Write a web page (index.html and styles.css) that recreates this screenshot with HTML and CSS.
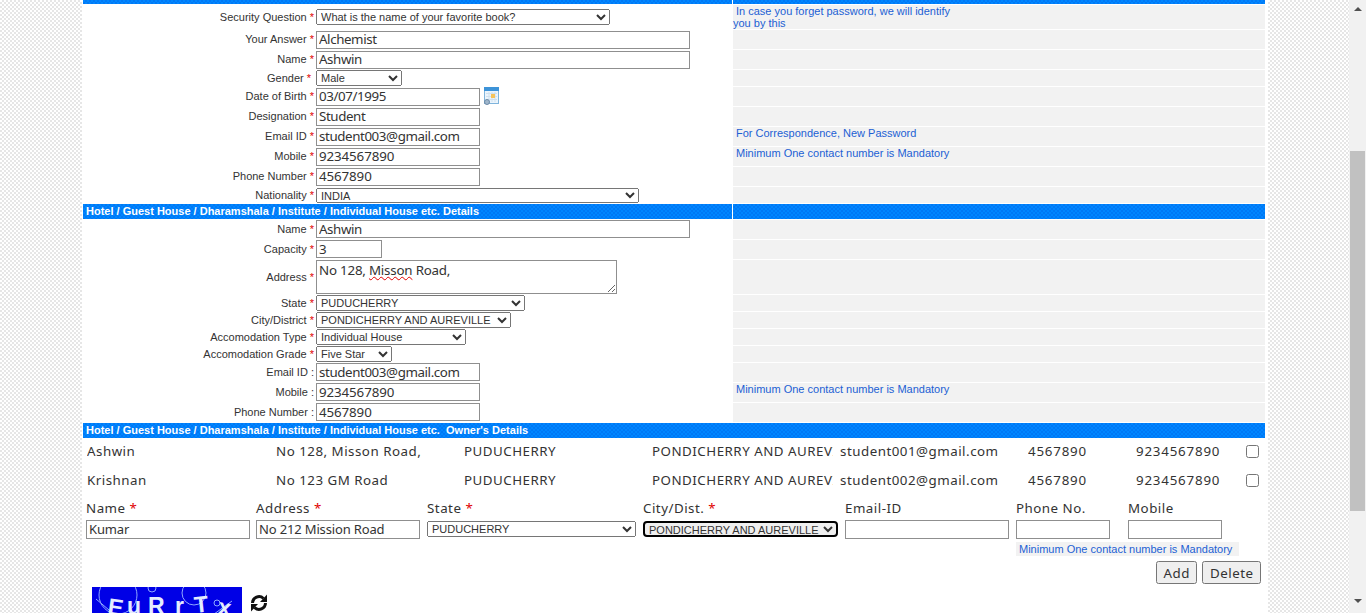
FILE: index.html
```html
<!DOCTYPE html>
<html lang="en">
<head>
    <meta charset="UTF-8">
    <meta name="viewport" content="width=device-width, initial-scale=1">
    <title>Registration</title>
    <link rel="stylesheet" href="styles.css">
</head>
<body>
<div class="page">
    <div class="content">
        <div class="panel">
            <table class="form-table">
                <colgroup>
                    <col class="col-label">
                    <col class="col-field">
                    <col class="col-hint">
                </colgroup>
                <tr class="h4"><td class="bar" colspan="2"></td><td class="bar"></td></tr>

                <tr class="h24">
                    <td class="label-cell">Security Question <span class="req">*</span></td>
                    <td class="field-cell">
                        <select class="sel w294 mt4"><option>What is the name of your favorite book?</option></select>
                    </td>
                    <td class="hint-cell"><div class="hint-wrap">In case you forget password, we will identify you by this</div></td>
                </tr>
                <tr class="h19">
                    <td class="label-cell">Your Answer <span class="req">*</span></td>
                    <td class="field-cell"><input class="txt w374" value="Alchemist"></td>
                    <td class="hint-cell"></td>
                </tr>
                <tr class="h19">
                    <td class="label-cell">Name <span class="req">*</span></td>
                    <td class="field-cell"><input class="txt w374" value="Ashwin"></td>
                    <td class="hint-cell"></td>
                </tr>
                <tr class="h16">
                    <td class="label-cell tight">Gender <span class="req">*</span></td>
                    <td class="field-cell">
                        <select class="sel w86"><option>Male</option></select>
                    </td>
                    <td class="hint-cell"></td>
                </tr>
                <tr class="h19">
                    <td class="label-cell">Date of Birth <span class="req">*</span></td>
                    <td class="field-cell dob-cell">
                        <input class="txt w164" value="03/07/1995">
                        <svg class="cal-icon" width="15" height="18" viewBox="0 0 15 18">
                            <rect x="0.5" y="0.5" width="14" height="16" fill="#eaf4fc" stroke="#7fb4dc"/>
                            <rect x="0" y="0" width="15" height="4" fill="#3d93d8"/>
                            <path d="M2 6.5h11M2 9.5h11M2 12.5h11M5 5v10M8 5v10M11 5v10" stroke="#cfe0ee" stroke-width="1"/>
                            <rect x="7" y="7" width="4" height="4" fill="#f6c35a"/>
                            <circle cx="3" cy="15" r="2.5" fill="#9fb6cc" stroke="#6d8aa6"/>
                        </svg>
                    </td>
                    <td class="hint-cell"></td>
                </tr>
                <tr class="h19">
                    <td class="label-cell">Designation <span class="req">*</span></td>
                    <td class="field-cell"><input class="txt w164" value="Student"></td>
                    <td class="hint-cell"></td>
                </tr>
                <tr class="h19">
                    <td class="label-cell">Email ID <span class="req">*</span></td>
                    <td class="field-cell"><input class="txt w164" value="student003@gmail.com"></td>
                    <td class="hint-cell"><div class="hint">For Correspondence, New Password</div></td>
                </tr>
                <tr class="h19">
                    <td class="label-cell">Mobile <span class="req">*</span></td>
                    <td class="field-cell"><input class="txt num w164" value="9234567890"></td>
                    <td class="hint-cell"><div class="hint">Minimum One contact number is Mandatory</div></td>
                </tr>
                <tr class="h19">
                    <td class="label-cell">Phone Number <span class="req">*</span></td>
                    <td class="field-cell"><input class="txt num w164" value="4567890"></td>
                    <td class="hint-cell"></td>
                </tr>
                <tr class="h16">
                    <td class="label-cell">Nationality <span class="req">*</span></td>
                    <td class="field-cell">
                        <select class="sel sel-short w323 mt1"><option>INDIA</option></select>
                    </td>
                    <td class="hint-cell"></td>
                </tr>

                <tr class="h15"><td class="bar" colspan="2">Hotel / Guest House / Dharamshala / Institute / Individual House etc. Details</td><td class="bar"></td></tr>

                <tr class="h19">
                    <td class="label-cell">Name <span class="req">*</span></td>
                    <td class="field-cell"><input class="txt flush w374" value="Ashwin"></td>
                    <td class="hint-cell"></td>
                </tr>
                <tr class="h19">
                    <td class="label-cell">Capacity <span class="req">*</span></td>
                    <td class="field-cell"><input class="txt flush w66" value="3"></td>
                    <td class="hint-cell"></td>
                </tr>
                <tr class="h34">
                    <td class="label-cell">Address <span class="req">*</span></td>
                    <td class="field-cell"><div class="area">No 128, <span class="misspelt">Misson</span> Road,</div></td>
                    <td class="hint-cell"></td>
                </tr>
                <tr class="h16">
                    <td class="label-cell">State <span class="req">*</span></td>
                    <td class="field-cell"><select class="sel w209"><option>PUDUCHERRY</option></select></td>
                    <td class="hint-cell"></td>
                </tr>
                <tr class="h16">
                    <td class="label-cell">City/District <span class="req">*</span></td>
                    <td class="field-cell"><select class="sel w195"><option>PONDICHERRY AND AUREVILLE</option></select></td>
                    <td class="hint-cell"></td>
                </tr>
                <tr class="h16">
                    <td class="label-cell">Accomodation Type <span class="req">*</span></td>
                    <td class="field-cell"><select class="sel w150"><option>Individual House</option></select></td>
                    <td class="hint-cell"></td>
                </tr>
                <tr class="h16">
                    <td class="label-cell">Accomodation Grade <span class="req">*</span></td>
                    <td class="field-cell"><select class="sel w76"><option>Five Star</option></select></td>
                    <td class="hint-cell"></td>
                </tr>
                <tr class="h19">
                    <td class="label-cell">Email ID :</td>
                    <td class="field-cell"><input class="txt flush w164" value="student003@gmail.com"></td>
                    <td class="hint-cell"></td>
                </tr>
                <tr class="h19">
                    <td class="label-cell">Mobile :</td>
                    <td class="field-cell"><input class="txt flush num w164" value="9234567890"></td>
                    <td class="hint-cell"><div class="hint">Minimum One contact number is Mandatory</div></td>
                </tr>
                <tr class="h19">
                    <td class="label-cell">Phone Number :</td>
                    <td class="field-cell"><input class="txt flush num w164" value="4567890"></td>
                    <td class="hint-cell"></td>
                </tr>

                <tr class="h15"><td class="bar" colspan="3">Hotel / Guest House / Dharamshala / Institute / Individual House etc.&nbsp; Owner's Details</td></tr>
            </table>

            <div class="owner-row">
                <span>Ashwin</span>
                <span>No 128, Misson Road,</span>
                <span>PUDUCHERRY</span>
                <span>PONDICHERRY AND AUREVILLE</span>
                <span>student001@gmail.com</span>
                <span class="owner-num">4567890</span>
                <span class="owner-num">9234567890</span>
                <input type="checkbox" class="check">
            </div>
            <div class="owner-row">
                <span>Krishnan</span>
                <span>No 123 GM Road</span>
                <span>PUDUCHERRY</span>
                <span>PONDICHERRY AND AUREVILLE</span>
                <span>student002@gmail.com</span>
                <span class="owner-num">4567890</span>
                <span class="owner-num">9234567890</span>
                <input type="checkbox" class="check">
            </div>

            <div class="owner-form">
                <label>Name <span class="req">*</span></label>
                <label>Address <span class="req">*</span></label>
                <label>State <span class="req">*</span></label>
                <label>City/Dist. <span class="req">*</span></label>
                <label>Email-ID</label>
                <label>Phone No.</label>
                <label>Mobile</label>

                <input class="txt small w164" value="Kumar">
                <input class="txt small w164" value="No 212 Mission Road">
                <select class="sel w209 mt1"><option>PUDUCHERRY</option></select>
                <select class="sel sel-focus w195 mt1"><option>PONDICHERRY AND AUREVILLE</option></select>
                <input class="txt small w164">
                <input class="txt small w94">
                <input class="txt small w94">
            </div>

            <div class="contact-note"><span class="hint note-text">Minimum One contact number is Mandatory</span></div>

            <div class="actions">
                <button class="btn">Add</button>
                <button class="btn">Delete</button>
            </div>

            <div class="captcha-row">
                <svg class="captcha" width="150" height="50" viewBox="0 0 150 50">
                    <rect width="150" height="50" fill="#0000e6"/>
                    <g fill="none" stroke="#8fa8ff" stroke-width="1">
                        <circle cx="26" cy="8" r="19"/>
                        <circle cx="60" cy="1" r="4"/>
                        <circle cx="102" cy="6" r="12"/>
                        <circle cx="125" cy="16" r="3"/>
                        <path d="M4 12 L30 34 M118 30 L140 14"/>
                    </g>
                    <g class="captcha-text">
                        <text x="15" y="27" transform="rotate(8 15 27)">E</text>
                        <text x="35" y="27">u</text>
                        <text x="56" y="27">R</text>
                        <text x="83" y="27">r</text>
                        <text x="103" y="26" transform="rotate(-6 103 26)">T</text>
                        <text x="125" y="27" transform="rotate(10 125 27)">x</text>
                    </g>
                </svg>
                <svg class="refresh" width="18" height="20" viewBox="0 0 18 20">
                    <g fill="none" stroke="#111" stroke-width="3">
                        <path d="M2.5 10 A6.5 6.5 0 0 1 13.5 5.5"/>
                        <path d="M15.5 10 A6.5 6.5 0 0 1 4.5 14.5"/>
                    </g>
                    <polygon points="17,1.5 17,9 10,9" fill="#111"/>
                    <polygon points="1,18.5 1,11 8,11" fill="#111"/>
                </svg>
            </div>
        </div>
    </div>

    <div class="scrollbar">
        <div class="arrow-up"></div>
        <div class="thumb"></div>
        <div class="arrow-down"></div>
    </div>
</div>
</body>
</html>
```

FILE: styles.css
```css
body {
    margin: 0;
    overflow: hidden;
    font-family: "Liberation Sans", Arial, sans-serif;
    color: #333;
}

.page {
    display: flex;
    height: 613px;
    overflow: hidden;
}

.content {
    flex: 1;
    padding-left: 82px;
    background: repeating-conic-gradient(#e6e6e6 0 25%, #fff 0 50%) 0 0 / 4px 4px;
}

.panel {
    width: 1186px;
    height: 613px;
    overflow: hidden;
    background: #fff;
}

/* main form table */
.form-table {
    width: 1184px;
    margin-top: -1px;
    margin-bottom: -3px;
    border-spacing: 1px;
    border-collapse: separate;
    table-layout: fixed;
}
.col-label { width: 232px; }
.col-field { width: 416px; }
.col-hint { width: 532px; }
.form-table td {
    padding: 0;
}
.h4 td { height: 4px; }
.h15 td { height: 15px; }
.h16 td { height: 16px; }
.h19 td { height: 19px; }
.h24 td { height: 24px; }
.h34 td { height: 34px; }

.bar {
    padding-left: 3px !important;
    background: repeating-conic-gradient(#0078f5 0 25%, #0086ff 0 50%) 0 0 / 4px 4px;
    color: #fff;
    font-size: 11px;
    font-weight: bold;
    line-height: 14px;
    white-space: nowrap;
    vertical-align: top;
}

.label-cell {
    padding-right: 1px !important;
    font-size: 11px;
    line-height: 12px;
    text-align: right;
    white-space: nowrap;
}
.h19 .label-cell {
    line-height: 18px;
    vertical-align: top;
}
.label-cell.tight {
    padding-right: 4px !important;
}
.req {
    color: #e00000;
}

.field-cell {
    vertical-align: top;
}
.dob-cell {
    display: flex;
    gap: 4px;
}
.cal-icon {
    flex: none;
}

.hint-cell {
    background: #f2f2f2;
    vertical-align: top;
}
.hint,
.hint-wrap {
    color: #1c5fd4;
    font-size: 11px;
    line-height: 12px;
}
.hint {
    padding-left: 3px;
}
.hint-wrap {
    width: 222px;
    text-indent: 3px;
}

/* inputs */
.txt {
    display: block;
    box-sizing: border-box;
    height: 18px;
    margin: 1px 0 0;
    padding: 0 2px 2px;
    border: 1px solid #8f8f8f;
    background: #fff;
    color: #333;
    font-family: "Noto Sans", sans-serif;
    font-size: 13.33px;
    letter-spacing: -0.4px;
}
.txt.num {
    letter-spacing: -0.1px;
}
.txt.flush {
    margin-top: 0;
    padding-bottom: 0;
}
.txt.small {
    height: 19px;
    margin: 0;
    font-size: 13px;
    letter-spacing: -0.15px;
}
.sel {
    display: block;
    box-sizing: border-box;
    height: 16px;
    margin: 0;
    padding: 0;
    color: #333;
    font-family: "Liberation Sans", Arial, sans-serif;
    font-size: 11px;
}
.sel-short {
    height: 15px;
}
.sel-focus {
    border: 2px solid #000;
    border-radius: 4px;
}
.mt1 { margin-top: 1px; }
.mt4 { margin-top: 4px; }
.w66 { width: 66px; }
.w76 { width: 76px; }
.w86 { width: 86px; }
.w94 { width: 94px; }
.w150 { width: 150px; }
.w164 { width: 164px; }
.w195 { width: 195px; }
.w209 { width: 209px; }
.w294 { width: 294px; }
.w323 { width: 323px; }
.w374 { width: 374px; }

.area {
    box-sizing: border-box;
    width: 301px;
    height: 34px;
    padding: 0 2px;
    overflow: auto;
    resize: both;
    border: 1px solid #8f8f8f;
    font-family: "Noto Sans", sans-serif;
    font-size: 13.33px;
    letter-spacing: -0.2px;
    line-height: 18px;
}
.misspelt {
    text-decoration: underline wavy #e00000;
    text-decoration-thickness: 1px;
}

/* owner list */
.owner-row {
    display: grid;
    grid-template-columns: 182px 181px 181px 181px 181px 101px 103px 13px;
    column-gap: 7px;
    align-items: center;
    height: 29px;
    margin-left: 5px;
    font-family: "Noto Sans", sans-serif;
    font-size: 13.33px;
    letter-spacing: 0.5px;
    white-space: nowrap;
}
.owner-row span {
    overflow: hidden;
}
.owner-row .owner-num {
    letter-spacing: 0.8px;
}
.check {
    width: 13px;
    height: 13px;
    margin: 1px 0 0;
}

.owner-form {
    display: grid;
    grid-template-columns: 170px 171px 216px 202px 171px 112px 94px;
    grid-template-rows: 25px 19px;
    margin: 1px 0 0 4px;
    font-family: "Noto Sans", sans-serif;
    font-size: 13.33px;
    letter-spacing: 0.5px;
}
.owner-form label {
    align-self: center;
}
.owner-form .txt {
    padding-bottom: 2px;
}

.contact-note {
    width: 223px;
    height: 14px;
    margin: 3px 0 0 934px;
    background: #f2f2f2;
}
.note-text {
    display: block;
    line-height: 14px;
}

.actions {
    display: flex;
    justify-content: flex-end;
    gap: 5px;
    height: 23px;
    margin: 5px 7px 0 0;
}
.btn {
    box-sizing: border-box;
    height: 23px;
    padding: 0 5.5px;
    color: #333;
    font-family: "Noto Sans", sans-serif;
    font-size: 13.33px;
    letter-spacing: 0.5px;
}

.captcha-row {
    display: flex;
    align-items: flex-start;
    gap: 8px;
    margin: 3px 0 0 10px;
}
.captcha,
.refresh {
    flex: none;
}
.refresh {
    margin-top: 6px;
}
.captcha-text {
    fill: #e4ecff;
    font-family: "Liberation Sans", sans-serif;
    font-size: 23px;
    font-weight: bold;
}

/* window scrollbar */
.scrollbar {
    display: flex;
    flex-direction: column;
    align-items: center;
    width: 17px;
    flex: none;
    background: #f1f1f1;
}
.arrow-up,
.arrow-down {
    width: 0;
    height: 0;
    border-left: 4px solid transparent;
    border-right: 4px solid transparent;
}
.arrow-up {
    margin-top: 7px;
    border-bottom: 4px solid #505050;
}
.arrow-down {
    margin-top: 88px;
    border-top: 4px solid #505050;
}
.thumb {
    width: 15px;
    height: 360px;
    margin-top: 140px;
    background: #c1c1c1;
}
```
